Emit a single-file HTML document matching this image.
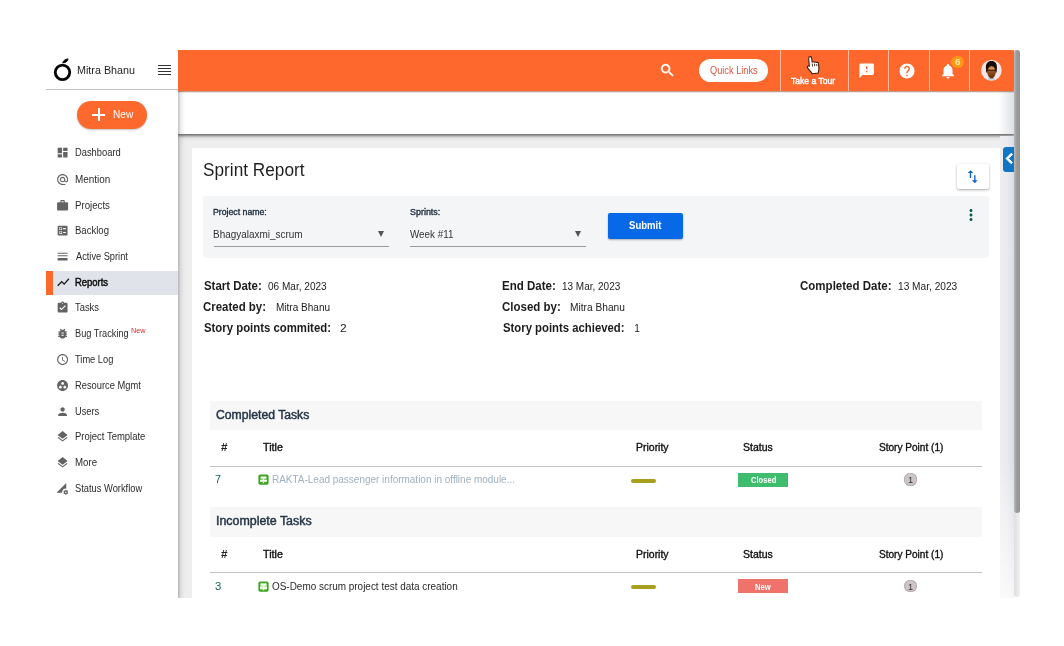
<!DOCTYPE html>
<html><head><meta charset="utf-8"><title>Sprint Report</title>
<style>
html,body{margin:0;padding:0;background:#fff;}
body{width:1064px;height:646px;position:relative;overflow:hidden;font-family:"Liberation Sans",sans-serif;}
.a{position:absolute;display:block;}
.t{position:absolute;white-space:nowrap;line-height:16px;height:16px;transform-origin:0 50%;font-family:"Liberation Sans",sans-serif;}
</style></head><body>
<!-- main grey background -->
<div class="a" style="left:178px;top:133px;width:836px;height:465px;background:#eeeeee"></div>
<!-- white card -->
<div class="a" style="left:192px;top:148px;width:808px;height:450px;background:#fff"></div>
<!-- filter box -->
<div class="a" style="left:203px;top:196px;width:786px;height:61.6px;background:#f4f5f7;border-radius:3px"></div>
<div class="a" style="left:213.5px;top:246px;width:175.5px;height:1px;background:#9a9a9a"></div>
<div class="a" style="left:410px;top:246px;width:176px;height:1px;background:#9a9a9a"></div>
<div class="a" style="left:377.8px;top:230.6px;width:0;height:0;border-left:3.6px solid transparent;border-right:3.6px solid transparent;border-top:6px solid #555"></div>
<div class="a" style="left:574.6px;top:230.6px;width:0;height:0;border-left:3.6px solid transparent;border-right:3.6px solid transparent;border-top:6px solid #555"></div>
<div class="a" style="left:608px;top:213.3px;width:74.6px;height:25.4px;background:#0768e8;border-radius:2px;box-shadow:0 1px 2px rgba(0,0,0,.3)"></div>
<!-- sort button -->
<div class="a" style="left:957px;top:164px;width:32px;height:24.5px;background:#fff;border-radius:2px;box-shadow:0 1px 2.5px rgba(0,0,0,.35)"></div>
<!-- tables -->
<div class="a" style="left:210px;top:400.5px;width:772px;height:29.7px;background:#f7f7f7"></div>
<div class="a" style="left:210px;top:466px;width:772px;height:1px;background:#c4c4c4"></div>
<div class="a" style="left:210px;top:507.3px;width:772px;height:29.3px;background:#f7f7f7"></div>
<div class="a" style="left:210px;top:572.3px;width:772px;height:1px;background:#c4c4c4"></div>
<!-- priority dashes -->
<div class="a" style="left:631px;top:478.6px;width:25px;height:4px;border-radius:2px;background:#a79f1d"></div>
<div class="a" style="left:631px;top:585px;width:25px;height:4px;border-radius:2px;background:#a79f1d"></div>
<!-- badges -->
<div class="a" style="left:738px;top:473px;width:50px;height:14px;background:#3fbd6e"></div>
<div class="a" style="left:738px;top:579.2px;width:50px;height:14.3px;background:#f0736b"></div>
<div class="a" style="left:904.3px;top:473.4px;width:12.6px;height:12.6px;border-radius:50%;background:#cdc4c8;box-shadow:inset 0 0 0 .6px #a79ea3"></div>
<div class="a" style="left:904.3px;top:579.8px;width:12.6px;height:12.6px;border-radius:50%;background:#cdc4c8;box-shadow:inset 0 0 0 .6px #a79ea3"></div>
<!-- task type icons -->
<svg class="a" style="left:258px;top:474px" width="11" height="11" viewBox="0 0 11 11"><rect x=".4" y=".6" width="10.2" height="10.2" rx="1.7" fill="#41a225"/><rect x="2.600" y="2.500" width="5.800" height="2.200" fill="#f2ffec"/><rect x="2.100" y="5.600" width="6.800" height="2.300" fill="#f2ffec"/><rect x="4.900" y="4.500" width="1.200" height="1.300" fill="#f2ffec"/><rect x="4.900" y="7.800" width="1.200" height="1.500" fill="#f2ffec"/></svg>
<svg class="a" style="left:258px;top:580.6px" width="11" height="11" viewBox="0 0 11 11"><rect x=".4" y=".6" width="10.2" height="10.2" rx="1.7" fill="#41a225"/><rect x="2.300" y="2.400" width="6.400" height="6.300" fill="#d8ffc8" opacity=".65"/><rect x="2.600" y="2.500" width="5.800" height="2.200" fill="#f2ffec"/><rect x="2.100" y="5.600" width="6.800" height="2.300" fill="#f2ffec"/><rect x="4.900" y="4.500" width="1.200" height="1.300" fill="#f2ffec"/><rect x="4.900" y="7.800" width="1.200" height="1.500" fill="#f2ffec"/></svg>
<!-- white sub-bar with shadow -->
<div class="a" style="left:178px;top:91px;width:836px;height:43px;background:#fff;box-shadow:0 1.5px 3px 0.6px rgba(0,0,0,.62),0 4px 5px rgba(0,0,0,.07)"></div>
<div class="a" style="left:998px;top:91px;width:16px;height:43px;background:linear-gradient(90deg,rgba(40,60,90,0),rgba(40,60,90,.16))"></div>
<!-- orange header -->
<div class="a" style="left:178px;top:50px;width:836px;height:41.3px;background:#fe682c;box-shadow:0 .5px 1.2px rgba(110,40,0,.55)"></div>
<div class="a" style="left:780px;top:50px;width:1px;height:41px;background:rgba(255,255,255,.55)"></div>
<div class="a" style="left:848px;top:50px;width:1px;height:41px;background:rgba(255,255,255,.55)"></div>
<div class="a" style="left:888.3px;top:50px;width:1px;height:41px;background:rgba(255,255,255,.55)"></div>
<div class="a" style="left:929.3px;top:50px;width:1px;height:41px;background:rgba(255,255,255,.55)"></div>
<div class="a" style="left:969px;top:50px;width:1px;height:41px;background:rgba(255,255,255,.55)"></div>
<div class="a" style="left:699px;top:59px;width:69.3px;height:23px;border-radius:12px;background:#fff"></div>
<div class="a" style="left:951.3px;top:56px;width:12.4px;height:12.4px;border-radius:50%;background:#ff9716"></div>
<!-- avatar -->
<svg class="a" style="left:981.2px;top:60.2px" width="20.8" height="20.8" viewBox="0 0 20.8 20.8"><defs><clipPath id="av"><circle cx="10.4" cy="10.4" r="10.4"/></clipPath><linearGradient id="fg" x1="0" y1="0" x2="0" y2="1"><stop offset="0" stop-color="#c77a35"/><stop offset=".55" stop-color="#8f4a18"/><stop offset="1" stop-color="#5e2e0e"/></linearGradient></defs><g clip-path="url(#av)"><rect width="20.8" height="20.8" fill="#f6e5e5"/><path d="M5.600 20.800C6 18.300 8 17.400 10.400 17.400S14.800 18.300 15.300 20.800z" fill="#cdd5e3"/><rect x="8.700" y="15" width="3.600" height="3.400" fill="#5a2c0e"/><path d="M4.900 8.200C4.600 3.500 7 1 10.500 1S16.300 3.500 15.900 8.200L15.600 12.500H5.200z" fill="#140d0b"/><ellipse cx="10.500" cy="12" rx="4.300" ry="5.900" fill="url(#fg)"/><ellipse cx="10.600" cy="8.500" rx="2.700" ry="1.300" fill="#e39a52" opacity=".8"/><path d="M6 10.300H15" stroke="#24140c" stroke-width=".9"/></g></svg>
<!-- scrollbar -->
<div class="a" style="left:1000px;top:136px;width:14px;height:462px;background:linear-gradient(90deg,#eeeeee,#e8eaef 55%,#d9dde6)"></div>
<div class="a" style="left:1000px;top:136px;width:14px;height:462px;background:linear-gradient(180deg,rgba(255,255,255,0) 70%,rgba(255,255,255,.75))"></div>
<div class="a" style="left:1014px;top:50px;width:6px;height:547px;background:linear-gradient(90deg,#dedede,#f1f1f1);border-radius:3px"></div>
<div class="a" style="left:1014px;top:50px;width:6px;height:462.5px;background:linear-gradient(90deg,#bcbcbc,#9c9c9c 40%,#929292);border-radius:3px"></div>
<!-- blue tab -->
<div class="a" style="left:1003px;top:146.5px;width:11px;height:25.5px;background:#0f76c5;border-radius:3px 0 0 3px"></div>
<!-- sidebar -->
<div class="a" style="left:178px;top:91px;width:7px;height:507px;background:linear-gradient(90deg,rgba(0,0,0,.24),rgba(0,0,0,.07) 40%,rgba(0,0,0,0))"></div>
<div class="a" style="left:46px;top:50px;width:132px;height:548px;background:#fff"></div>
<div class="a" style="left:46px;top:50px;width:132px;height:41px;background:#fff"></div>
<div class="a" style="left:46px;top:89px;width:132px;height:1px;background:#c2c2c2"></div>
<div class="a" style="left:52.5px;top:270.800px;width:125.500px;height:24px;background:#e0e3ea"></div>
<div class="a" style="left:46px;top:270.800px;width:6.500px;height:24px;background:#fb6a2c"></div>
<!-- new button -->
<div class="a" style="left:77px;top:101px;width:70px;height:28px;border-radius:14px;background:#fd692d;box-shadow:0 1px 2px rgba(0,0,0,.25)"></div>
<div class="a" style="left:92px;top:113.7px;width:13.2px;height:2px;background:#fff"></div>
<div class="a" style="left:97.6px;top:108.1px;width:2px;height:13.2px;background:#fff"></div>
<!-- hamburger -->
<div class="a" style="left:158px;top:65px;width:13px;height:1.2px;background:#333;box-shadow:0 3px 0 #333,0 6px 0 #333,0 9px 0 #333"></div>
<!-- logo -->
<svg class="a" style="left:52px;top:57px" width="22" height="26" viewBox="0 0 22 26"><circle cx="10.5" cy="15.3" r="7.25" fill="none" stroke="#050505" stroke-width="2.8"/><path d="M10.700 5.800C11.300 3.500 13.700 1.900 16.100 1.900C15.900 4.300 13.700 5.800 10.700 5.800z" fill="#050505" stroke="#050505" stroke-width=".9" stroke-linejoin="round"/></svg>
<!-- cursor hand -->
<svg class="a" style="left:803.6px;top:55.3px;transform:rotate(-5deg)" width="17.2" height="20" viewBox="0 0 18 21"><path d="M5.500 9.500V3.200c0-1 .7-1.700 1.600-1.700s1.600.7 1.600 1.700v4.300c.5-.4 1.800-.4 2.300.3.600-.4 1.900-.3 2.300.5.700-.3 2-.1 2 1.300v5.200c0 1.500-.5 2.500-1 3.500v1.200H7.300v-1.200c-1-1-2.500-3-3.800-5.200-.6-1-.1-1.800.6-2 .6-.2 1.100.1 1.400.4z" fill="#fff" stroke="#3a1a10" stroke-width="1.100" stroke-linejoin="round"/><path d="M8.800 9v3M11.100 9.300v2.700M13.400 9.800v2.200" stroke="#3a1a10" stroke-width=".9" fill="none"/></svg>
<svg class="a" style="left:56.40px;top:145.90px" width="13.2" height="13.2" viewBox="0 0 24 24"><path fill="#636363" stroke="#636363" stroke-width="0" d="M3 13h8V3H3v10zm0 8h8v-6H3v6zm10 0h8V11h-8v10zm0-18v6h8V3h-8z"/></svg>
<svg class="a" style="left:56.40px;top:172.90px" width="13.2" height="13.2" viewBox="0 0 24 24"><path fill="#636363" stroke="#636363" stroke-width="0" d="M12 2C6.48 2 2 6.48 2 12s4.48 10 10 10h5v-2h-5c-4.34 0-8-3.66-8-8s3.66-8 8-8 8 3.66 8 8v1.43c0 .79-.71 1.57-1.5 1.57s-1.5-.78-1.5-1.57V12c0-2.76-2.24-5-5-5s-5 2.24-5 5 2.24 5 5 5c1.38 0 2.64-.56 3.54-1.47.65.89 1.77 1.47 2.96 1.47 1.97 0 3.5-1.6 3.5-3.57V12c0-5.52-4.48-10-10-10zm0 13c-1.66 0-3-1.34-3-3s1.34-3 3-3 3 1.34 3 3-1.34 3-3 3z"/></svg>
<svg class="a" style="left:56.40px;top:198.80px" width="13.2" height="13.2" viewBox="0 0 24 24"><path fill="#636363" stroke="#636363" stroke-width="0" d="M20 6h-4V4c0-1.11-.89-2-2-2h-4c-1.11 0-2 .89-2 2v2H4c-1.11 0-1.99.89-1.99 2L2 19c0 1.11.89 2 2 2h16c1.11 0 2-.89 2-2V8c0-1.11-.89-2-2-2zm-6 0h-4V4h4v2z"/></svg>
<svg class="a" style="left:56.40px;top:224.00px" width="13.2" height="13.2" viewBox="0 0 24 24"><path fill="#636363" stroke="#636363" stroke-width="0" d="M13 9.5h5v-2h-5v2zm0 7h5v-2h-5v2zm6 4.5H5c-1.1 0-2-.9-2-2V5c0-1.1.9-2 2-2h14c1.1 0 2 .9 2 2v14c0 1.1-.9 2-2 2zM6 11h5V6H6v5zm1-4h3v3H7V7zM6 18h5v-5H6v5zm1-4h3v3H7v-3z"/></svg>
<svg class="a" style="left:56.40px;top:249.90px" width="13.2" height="13.2" viewBox="0 0 24 24"><path fill="#636363" stroke="#636363" stroke-width="0" d="M3 5h18v1.6H3zM3 9.6h18v1.6H3zM3 14.5h18v4.5H3z"/></svg>
<svg class="a" style="left:55.75px;top:275.15px" width="14.5" height="14.5" viewBox="0 0 24 24"><path fill="#111" stroke="#111" stroke-width="0" d="M3.5 18.49l6-6.01 4 4L22 6.92l-1.41-1.41-7.09 7.97-4-4L2 16.99z"/></svg>
<svg class="a" style="left:56.40px;top:301.00px" width="13.2" height="13.2" viewBox="0 0 24 24"><path fill="#636363" stroke="#636363" stroke-width="0" d="M19 3h-4.18C14.4 1.84 13.3 1 12 1c-1.3 0-2.4.84-2.82 2H5c-1.1 0-2 .9-2 2v14c0 1.1.9 2 2 2h14c1.1 0 2-.9 2-2V5c0-1.1-.9-2-2-2zm-7 0c.55 0 1 .45 1 1s-.45 1-1 1-1-.45-1-1 .45-1 1-1zm-2 14l-4-4 1.41-1.41L10 14.17l6.59-6.59L18 9l-8 8z"/></svg>
<svg class="a" style="left:56.40px;top:326.90px" width="13.2" height="13.2" viewBox="0 0 24 24"><path fill="#636363" stroke="#636363" stroke-width="0" d="M20 8h-2.81c-.45-.78-1.07-1.45-1.82-1.96L17 4.41 15.59 3l-2.17 2.17C12.96 5.06 12.49 5 12 5c-.49 0-.96.06-1.41.17L8.41 3 7 4.41l1.62 1.63C7.88 6.55 7.26 7.22 6.81 8H4v2h2.09c-.05.33-.09.66-.09 1v1H4v2h2v1c0 .34.04.67.09 1H4v2h2.81c1.04 1.79 2.97 3 5.19 3s4.15-1.21 5.19-3H20v-2h-2.09c.05-.33.09-.66.09-1v-1h2v-2h-2v-1c0-.34-.04-.67-.09-1H20V8zm-6 8h-4v-2h4v2zm0-4h-4v-2h4v2z"/></svg>
<svg class="a" style="left:56.40px;top:352.90px" width="13.2" height="13.2" viewBox="0 0 24 24"><path fill="#636363" stroke="#636363" stroke-width="0" d="M11.99 2C6.47 2 2 6.48 2 12s4.47 10 9.99 10C17.52 22 22 17.52 22 12S17.52 2 11.99 2zM12 20c-4.42 0-8-3.58-8-8s3.58-8 8-8 8 3.58 8 8-3.58 8-8 8zm.5-13H11v6l5.25 3.15.75-1.23-4.5-2.67z"/></svg>
<svg class="a" style="left:56.40px;top:378.80px" width="13.2" height="13.2" viewBox="0 0 24 24"><path fill="#636363" stroke="#636363" stroke-width="0" d="M12 2C6.48 2 2 6.48 2 12s4.48 10 10 10 10-4.48 10-10S17.52 2 12 2zM8 17.5c-1.38 0-2.5-1.12-2.5-2.5s1.12-2.5 2.5-2.5 2.5 1.12 2.5 2.5-1.12 2.5-2.5 2.5zM9.5 8c0-1.38 1.12-2.5 2.5-2.5s2.5 1.12 2.5 2.5-1.12 2.5-2.5 2.5S9.5 9.38 9.5 8zm6.5 9.5c-1.38 0-2.5-1.12-2.5-2.5s1.12-2.5 2.5-2.5 2.5 1.12 2.5 2.5-1.12 2.5-2.5 2.5z"/></svg>
<svg class="a" style="left:56.40px;top:404.80px" width="13.2" height="13.2" viewBox="0 0 24 24"><path fill="#636363" stroke="#636363" stroke-width="0" d="M12 12c2.21 0 4-1.79 4-4s-1.79-4-4-4-4 1.79-4 4 1.79 4 4 4zm0 2c-2.67 0-8 1.34-8 4v2h16v-2c0-2.66-5.33-4-8-4z"/></svg>
<svg class="a" style="left:56.40px;top:430.10px" width="13.2" height="13.2" viewBox="0 0 24 24"><path fill="#636363" stroke="#636363" stroke-width="0" d="M11.99 18.54l-7.37-5.73L3 14.07l9 7 9-7-1.63-1.27-7.38 5.74zM12 16l7.36-5.73L21 9l-9-7-9 7 1.63 1.27L12 16z"/></svg>
<svg class="a" style="left:56.40px;top:455.90px" width="13.2" height="13.2" viewBox="0 0 24 24"><path fill="#636363" stroke="#636363" stroke-width="0" d="M11.99 18.54l-7.37-5.73L3 14.07l9 7 9-7-1.63-1.27-7.38 5.74zM12 16l7.36-5.73L21 9l-9-7-9 7 1.63 1.27L12 16z"/></svg>
<svg class="a" style="left:56.40px;top:481.70px" width="13.2" height="13.2" viewBox="-1 -2 27 27"><path fill="#636363" stroke="#636363" stroke-width="0" d="M18.99 11.5c.34 0 .67.03 1 .07L20 0 0 20h11.56c-.04-.33-.07-.66-.07-1 0-4.14 3.36-7.5 7.5-7.5zm3.71 7.99c.02-.16.04-.32.04-.49 0-.17-.01-.33-.04-.49l1.06-.83c.09-.08.12-.21.06-.32l-1-1.73c-.06-.11-.19-.15-.31-.11l-1.24.5c-.26-.2-.54-.37-.85-.49l-.19-1.32c-.01-.12-.12-.21-.24-.21h-2c-.12 0-.23.09-.25.21l-.19 1.32c-.3.13-.59.29-.85.49l-1.24-.5c-.11-.04-.24 0-.31.11l-1 1.73c-.06.11-.04.24.06.32l1.06.83c-.02.16-.03.32-.03.49 0 .17.01.33.03.49l-1.06.83c-.09.08-.12.21-.06.32l1 1.73c.06.11.19.15.31.11l1.24-.5c.26.2.54.37.85.49l.19 1.32c.02.12.12.21.25.21h2c.12 0 .23-.09.25-.21l.19-1.32c.3-.13.59-.29.84-.49l1.25.5c.11.04.24 0 .31-.11l1-1.73c.06-.11.03-.24-.06-.32l-1.07-.83zm-3.71 1.01c-.83 0-1.5-.67-1.5-1.5s.67-1.5 1.5-1.5 1.5.67 1.5 1.5-.67 1.5-1.5 1.5z"/></svg>
<svg class="a" style="left:659.00px;top:61.90px" width="16.8" height="16.8" viewBox="0 0 24 24"><path fill="#fff" stroke="#fff" stroke-width="0.7" d="M15.5 14h-.79l-.28-.27C15.41 12.59 16 11.11 16 9.5 16 5.91 13.09 3 9.5 3S3 5.91 3 9.5 5.91 16 9.5 16c1.61 0 3.09-.59 4.23-1.57l.27.28v.79l5 4.99L20.49 19l-4.99-5zm-6 0C7.01 14 5 11.99 5 9.5S7.01 5 9.5 5 14 7.01 14 9.5 11.99 14 9.5 14z"/></svg>
<svg class="a" style="left:858.30px;top:62.10px" width="17.4" height="17.4" viewBox="0 0 24 24"><path fill="#fff" stroke="#fff" stroke-width="0" d="M20 2H4c-1.1 0-1.99.9-1.99 2L2 22l4-4h14c1.1 0 2-.9 2-2V4c0-1.1-.9-2-2-2zm-7 12h-2v-2h2v2zm0-4h-2V6h2v4z"/></svg>
<svg class="a" style="left:898.30px;top:62.00px" width="18" height="18" viewBox="0 0 24 24"><path fill="#fff" stroke="#fff" stroke-width="0" d="M12 2C6.48 2 2 6.48 2 12s4.48 10 10 10 10-4.48 10-10S17.52 2 12 2zm1 17h-2v-2h2v2zm2.07-7.75l-.9.92C13.45 12.9 13 13.5 13 15h-2v-.5c0-1.1.45-2.1 1.17-2.83l1.24-1.26c.37-.36.59-.86.59-1.41 0-1.1-.9-2-2-2s-2 .9-2 2H8c0-2.21 1.79-4 4-4s4 1.79 4 4c0 .88-.36 1.68-.93 2.25z"/></svg>
<svg class="a" style="left:938.90px;top:61.85px" width="18" height="18" viewBox="0 0 24 24"><path fill="#fff" stroke="#fff" stroke-width="0" d="M12 22c1.1 0 2-.9 2-2h-4c0 1.1.89 2 2 2zm6-6v-5c0-3.07-1.64-5.64-4.5-6.32V4c0-.83-.67-1.5-1.5-1.5s-1.5.67-1.5 1.5v.68C7.63 5.36 6 7.92 6 11v5l-2 2v1h16v-1l-2-2z"/></svg>
<svg class="a" style="left:961.50px;top:206.00px" width="18" height="18" viewBox="0 0 24 24"><path fill="#0b5a4e" stroke="#0b5a4e" stroke-width="0" d="M12 8c1.1 0 2-.9 2-2s-.9-2-2-2-2 .9-2 2 .9 2 2 2zm0 2c-1.1 0-2 .9-2 2s.9 2 2 2 2-.9 2-2-.9-2-2-2zm0 6c-1.1 0-2 .9-2 2s.9 2 2 2 2-.9 2-2-.9-2-2-2z"/></svg>
<svg class="a" style="left:964.35px;top:167.65px" width="17.3" height="17.3" viewBox="0 0 24 24"><path fill="#1767c2" stroke="#1767c2" stroke-width="0" d="M9 3L5 6.99h3V14h2V6.99h3L9 3zm7 14.01V10h-2v7.01h-3L15 21l4-3.99h-3z"/></svg>
<svg class="a" style="left:998.90px;top:148.40px" width="21" height="21" viewBox="0 0 24 24"><path fill="#fff" stroke="#fff" stroke-width="1.1" d="M15.41 7.41L14 6l-6 6 6 6 1.41-1.41L10.83 12z"/></svg>

<div class="a" style="left:0;top:0;width:1064px;height:646px;will-change:transform">
<span class="t" style="left:76.64px;top:62px;font-size:10.6px;font-weight:400;color:#1d1d1d;transform:scaleX(1.0162);">Mitra Bhanu</span>
<span class="t" style="left:112.79px;top:107px;font-size:10.3px;font-weight:400;color:#fff;transform:scaleX(0.9793);">New</span>
<span class="t" style="left:74.85px;top:145px;font-size:10px;font-weight:400;color:#2b2b2b;transform:scaleX(0.9346);">Dashboard</span>
<span class="t" style="left:74.81px;top:172px;font-size:10px;font-weight:400;color:#2b2b2b;transform:scaleX(0.9893);">Mention</span>
<span class="t" style="left:74.83px;top:198px;font-size:10px;font-weight:400;color:#2b2b2b;transform:scaleX(0.9665);">Projects</span>
<span class="t" style="left:74.84px;top:223px;font-size:10px;font-weight:400;color:#2b2b2b;transform:scaleX(0.9542);">Backlog</span>
<span class="t" style="left:75.60px;top:249px;font-size:10px;font-weight:400;color:#2b2b2b;transform:scaleX(0.9233);">Active Sprint</span>
<span class="t" style="left:74.84px;top:275px;font-size:10px;font-weight:400;color:#0c0c0c;transform:scaleX(0.9449);-webkit-text-stroke:.45px #0c0c0c;">Reports</span>
<span class="t" style="left:75.41px;top:300px;font-size:10px;font-weight:400;color:#2b2b2b;transform:scaleX(0.9396);">Tasks</span>
<span class="t" style="left:74.86px;top:326px;font-size:10px;font-weight:400;color:#2b2b2b;transform:scaleX(0.9207);">Bug Tracking</span>
<span class="t" style="left:75.41px;top:352px;font-size:10px;font-weight:400;color:#2b2b2b;transform:scaleX(0.9284);">Time Log</span>
<span class="t" style="left:74.85px;top:378px;font-size:10px;font-weight:400;color:#2b2b2b;transform:scaleX(0.9319);">Resource Mgmt</span>
<span class="t" style="left:74.90px;top:404px;font-size:10px;font-weight:400;color:#2b2b2b;transform:scaleX(0.9275);">Users</span>
<span class="t" style="left:74.84px;top:429px;font-size:10px;font-weight:400;color:#2b2b2b;transform:scaleX(0.9472);">Project Template</span>
<span class="t" style="left:74.82px;top:455px;font-size:10px;font-weight:400;color:#2b2b2b;transform:scaleX(0.9689);">More</span>
<span class="t" style="left:75.18px;top:481px;font-size:10px;font-weight:400;color:#2b2b2b;transform:scaleX(0.9325);">Status Workflow</span>
<span class="t" style="left:130.71px;top:323px;font-size:7px;font-weight:400;color:#e02d2d;transform:scaleX(1.0473);">New</span>
<span class="t" style="left:709.88px;top:63px;font-size:10px;font-weight:400;color:#dc5640;transform:scaleX(0.9237);">Quick Links</span>
<span class="t" style="left:791.33px;top:73px;font-size:9.1px;font-weight:400;color:#fff;transform:scaleX(0.9413);-webkit-text-stroke:.4px #fff;">Take a Tour</span>
<span class="t" style="left:954.65px;top:54px;font-size:9px;font-weight:700;color:#ffeaa0;transform:scaleX(1.0997);">6</span>
<span class="t" style="left:202.52px;top:162px;font-size:18px;font-weight:400;color:#1f1f1f;transform:scaleX(0.9573);">Sprint Report</span>
<span class="t" style="left:213.10px;top:204px;font-size:8.5px;font-weight:400;color:#1f2d3d;transform:scaleX(1.0252);-webkit-text-stroke:.35px #1f2d3d;">Project name:</span>
<span class="t" style="left:213.20px;top:227px;font-size:10.2px;font-weight:400;color:#333;transform:scaleX(0.9759);">Bhagyalaxmi_scrum</span>
<span class="t" style="left:409.80px;top:204px;font-size:8.5px;font-weight:400;color:#1f2d3d;transform:scaleX(1.0510);-webkit-text-stroke:.35px #1f2d3d;">Sprints:</span>
<span class="t" style="left:410.40px;top:227px;font-size:10.2px;font-weight:400;color:#333;transform:scaleX(0.9660);">Week #11</span>
<span class="t" style="left:628.66px;top:218px;font-size:10.2px;font-weight:700;color:#fff;transform:scaleX(0.9408);">Submit</span>
<span class="t" style="left:203.61px;top:278px;font-size:12px;font-weight:700;color:#1c1c1c;transform:scaleX(0.9517);">Start Date:</span>
<span class="t" style="left:267.55px;top:279px;font-size:10px;font-weight:400;color:#222;transform:scaleX(1.0050);">06 Mar, 2023</span>
<span class="t" style="left:203.24px;top:299px;font-size:12px;font-weight:700;color:#1c1c1c;transform:scaleX(0.9547);">Created by:</span>
<span class="t" style="left:275.70px;top:300px;font-size:10px;font-weight:400;color:#222;transform:scaleX(1.0028);">Mitra Bhanu</span>
<span class="t" style="left:203.72px;top:320px;font-size:12px;font-weight:700;color:#1c1c1c;transform:scaleX(0.9473);">Story points commited:</span>
<span class="t" style="left:340.00px;top:321px;font-size:10px;font-weight:400;color:#222;transform:scaleX(1.1957);">2</span>
<span class="t" style="left:501.55px;top:278px;font-size:12px;font-weight:700;color:#1c1c1c;transform:scaleX(0.9610);">End Date:</span>
<span class="t" style="left:562.15px;top:279px;font-size:10px;font-weight:400;color:#222;transform:scaleX(0.9980);">13 Mar, 2023</span>
<span class="t" style="left:501.84px;top:299px;font-size:12px;font-weight:700;color:#1c1c1c;transform:scaleX(0.9574);">Closed by:</span>
<span class="t" style="left:569.89px;top:300px;font-size:10px;font-weight:400;color:#222;transform:scaleX(1.0180);">Mitra Bhanu</span>
<span class="t" style="left:502.52px;top:320px;font-size:12px;font-weight:700;color:#1c1c1c;transform:scaleX(0.9444);">Story points achieved:</span>
<span class="t" style="left:634.25px;top:321px;font-size:10px;font-weight:400;color:#222;transform:scaleX(1.0000);">1</span>
<span class="t" style="left:800.04px;top:278px;font-size:12px;font-weight:700;color:#1c1c1c;transform:scaleX(0.9600);">Completed Date:</span>
<span class="t" style="left:897.74px;top:279px;font-size:10px;font-weight:400;color:#222;transform:scaleX(1.0138);">13 Mar, 2023</span>
<span class="t" style="left:216.19px;top:407px;font-size:12px;font-weight:400;color:#263545;transform:scaleX(1.0163);-webkit-text-stroke:.45px #263545;">Completed Tasks</span>
<span class="t" style="left:215.58px;top:513px;font-size:12px;font-weight:400;color:#263545;transform:scaleX(1.0339);-webkit-text-stroke:.45px #263545;">Incomplete Tasks</span>
<span class="t" style="left:220.82px;top:440px;font-size:10px;font-weight:700;color:#222;transform:scaleX(1.1698);">#</span>
<span class="t" style="left:263.49px;top:440px;font-size:10.2px;font-weight:400;color:#111;transform:scaleX(1.0511);-webkit-text-stroke:.35px #111;">Title</span>
<span class="t" style="left:635.66px;top:440px;font-size:10.2px;font-weight:400;color:#111;transform:scaleX(1.0285);-webkit-text-stroke:.35px #111;">Priority</span>
<span class="t" style="left:742.53px;top:440px;font-size:10.2px;font-weight:400;color:#111;transform:scaleX(1.0284);-webkit-text-stroke:.35px #111;">Status</span>
<span class="t" style="left:878.55px;top:440px;font-size:10.2px;font-weight:400;color:#111;transform:scaleX(0.9885);-webkit-text-stroke:.35px #111;">Story Point (1)</span>
<span class="t" style="left:220.82px;top:547px;font-size:10px;font-weight:700;color:#222;transform:scaleX(1.1698);">#</span>
<span class="t" style="left:263.49px;top:547px;font-size:10.2px;font-weight:400;color:#111;transform:scaleX(1.0511);-webkit-text-stroke:.35px #111;">Title</span>
<span class="t" style="left:635.66px;top:547px;font-size:10.2px;font-weight:400;color:#111;transform:scaleX(1.0285);-webkit-text-stroke:.35px #111;">Priority</span>
<span class="t" style="left:742.53px;top:547px;font-size:10.2px;font-weight:400;color:#111;transform:scaleX(1.0284);-webkit-text-stroke:.35px #111;">Status</span>
<span class="t" style="left:878.55px;top:547px;font-size:10.2px;font-weight:400;color:#111;transform:scaleX(0.9885);-webkit-text-stroke:.35px #111;">Story Point (1)</span>
<span class="t" style="left:215.26px;top:472px;font-size:10px;font-weight:400;color:#145f55;transform:scaleX(1.0870);">7</span>
<span class="t" style="left:271.90px;top:472px;font-size:10px;font-weight:400;color:#9fb0be;transform:scaleX(0.9972);">RAKTA-Lead passenger information in offline module...</span>
<span class="t" style="left:215.41px;top:579px;font-size:10px;font-weight:400;color:#145f55;transform:scaleX(1.1250);">3</span>
<span class="t" style="left:272.25px;top:579px;font-size:10px;font-weight:400;color:#2a2a2a;transform:scaleX(0.9942);">OS-Demo scrum project test data creation</span>
<span class="t" style="left:750.90px;top:472px;font-size:8.3px;font-weight:700;color:#fff;transform:scaleX(0.9144);">Closed</span>
<span class="t" style="left:755.30px;top:579px;font-size:8.3px;font-weight:700;color:#fff;transform:scaleX(0.9187);">New</span>
<span class="t" style="left:907.91px;top:472px;font-size:9.2px;font-weight:400;color:#333;transform:scaleX(1.0000);">1</span>
<span class="t" style="left:907.91px;top:579px;font-size:9.2px;font-weight:400;color:#333;transform:scaleX(1.0000);">1</span>
</div>
</body></html>
